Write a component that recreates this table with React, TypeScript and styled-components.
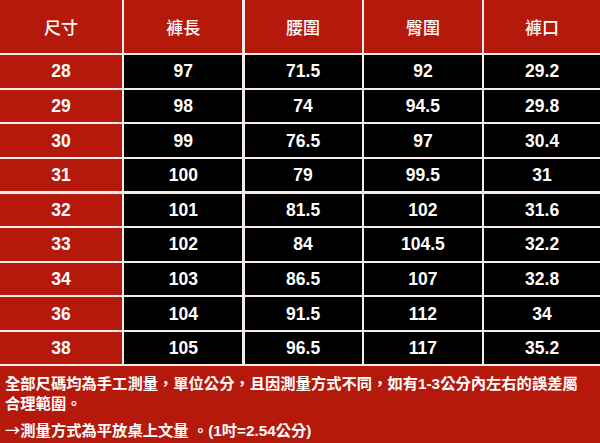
import React from "react";
import styled, { createGlobalStyle } from "styled-components";

const Global = createGlobalStyle`
  html, body { margin: 0; padding: 0; background: #b5190c; }
  body { width: 600px; height: 443px; overflow: hidden; }
`;

const Page = styled.div`
  width: 600px;
  height: 443px;
  display: flex;
  flex-direction: column;
  background: #b5190c;
  font-family: "Liberation Sans", "Noto Sans CJK TC", sans-serif;
`;

const Grid = styled.div`
  display: grid;
  grid-template-columns: 122px 118px 117px 118px 1fr;
  grid-template-rows: 53px repeat(9, 32.3px);
  gap: 2.3px;
  background: #f3ecea;
  border-bottom: 2px solid #f3ecea;
`;

const Cell = styled.div<{ $dark?: boolean; $head?: boolean }>`
  display: flex;
  align-items: center;
  justify-content: center;
  background: ${(p) => (p.$dark ? "#000" : "#b5190c")};
  color: #fff;
  font-size: ${(p) => (p.$head ? "17px" : "17.5px")};
  font-weight: ${(p) => (p.$head ? 500 : 700)};
  font-family: ${(p) =>
    p.$head
      ? '"Noto Sans CJK TC", sans-serif'
      : '"Liberation Sans", "Noto Sans CJK TC", sans-serif'};
  padding-top: ${(p) => (p.$head ? "0" : "1px")};
`;

const Note = styled.div`
  padding: 8px 0 0 5px;
  color: #fff;
  font-size: 15.3px;
  font-weight: 700;
  line-height: 20px;
  font-family: "Liberation Sans", "Noto Sans CJK TC", sans-serif;
  white-space: nowrap;
`;

const NoteLine = styled.div<{ $gap?: boolean }>`
  margin-top: ${(p) => (p.$gap ? "5px" : "0")};
`;

const Arrow = styled.span`
  font-family: "Noto Sans CJK TC", sans-serif;
  font-weight: 500;
`;

const headers = ["尺寸", "褲長", "腰圍", "臀圍", "褲口"];
const rows: string[][] = [
  ["28", "97", "71.5", "92", "29.2"],
  ["29", "98", "74", "94.5", "29.8"],
  ["30", "99", "76.5", "97", "30.4"],
  ["31", "100", "79", "99.5", "31"],
  ["32", "101", "81.5", "102", "31.6"],
  ["33", "102", "84", "104.5", "32.2"],
  ["34", "103", "86.5", "107", "32.8"],
  ["36", "104", "91.5", "112", "34"],
  ["38", "105", "96.5", "117", "35.2"],
];

export default function App() {
  return (
    <Page>
      <Global />
      <Grid>
        {headers.map((h) => (
          <Cell key={h} $head>
            {h}
          </Cell>
        ))}
        {rows.map((r) =>
          r.map((v, i) => (
            <Cell key={r[0] + "-" + i} $dark={i > 0}>
              {v}
            </Cell>
          ))
        )}
      </Grid>
      <Note>
        <NoteLine>全部尺碼均為手工測量，單位公分，且因測量方式不同，如有1-3公分內左右的誤差屬</NoteLine>
        <NoteLine>合理範圍。</NoteLine>
        <NoteLine $gap>
          <Arrow>→</Arrow>測量方式為平放桌上文量 。(1吋=2.54公分)
        </NoteLine>
      </Note>
    </Page>
  );
}
